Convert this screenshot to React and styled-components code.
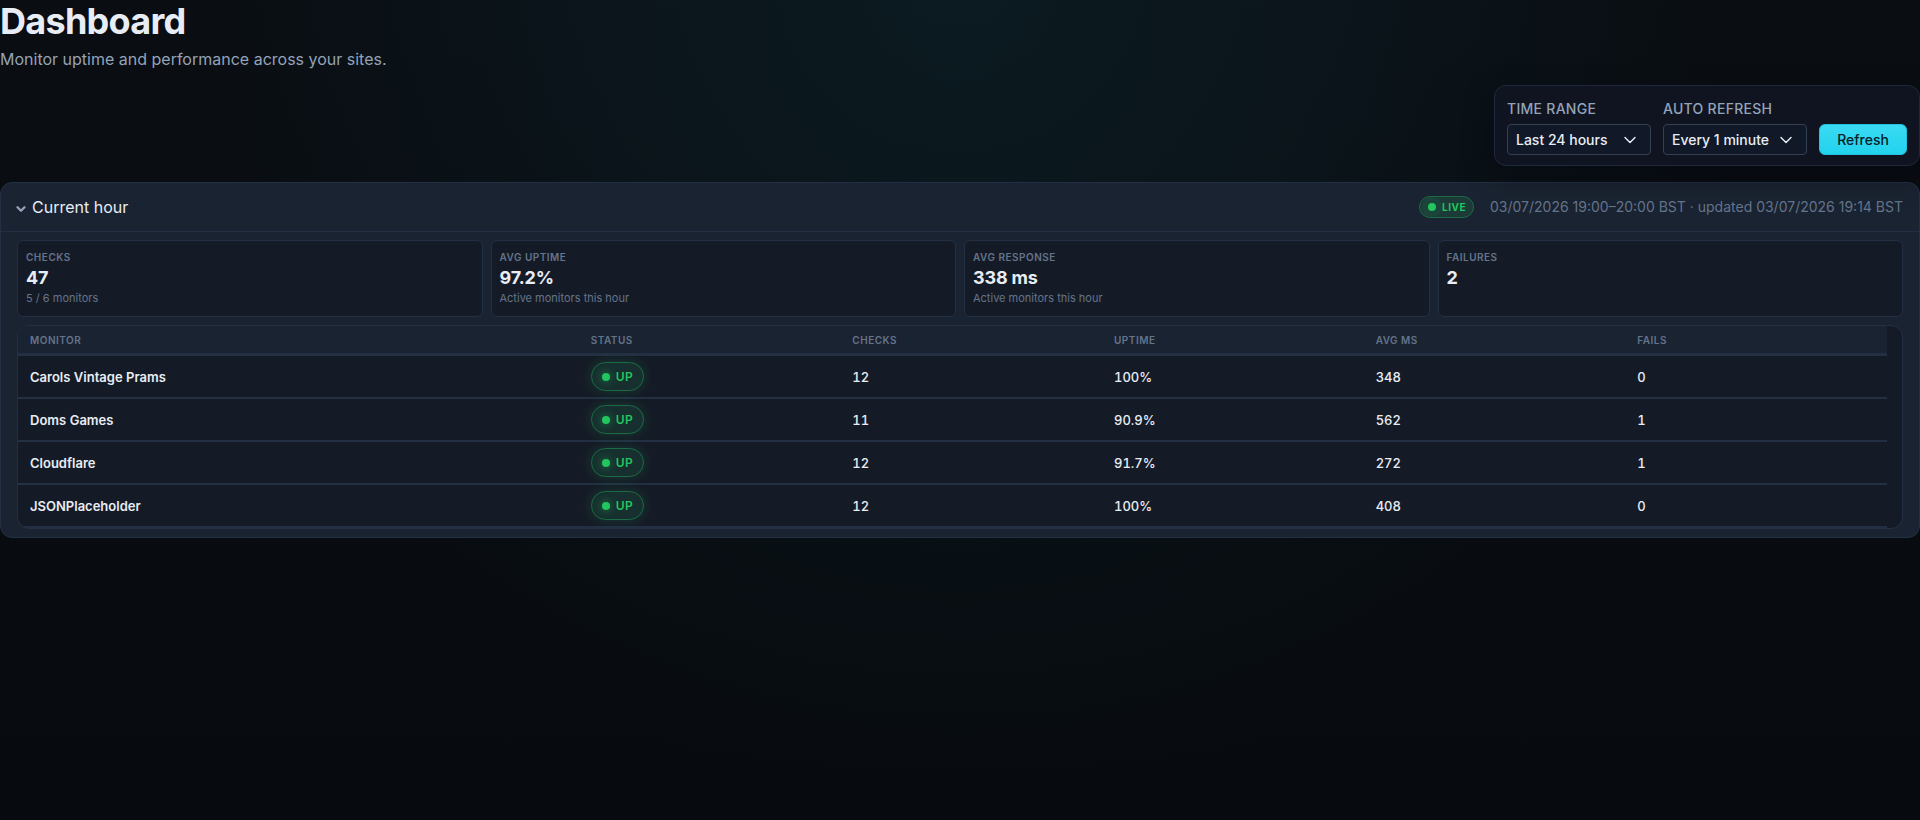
import React, { useState } from 'react';

import styled, { createGlobalStyle } from 'styled-components';
import { ChevronDown } from 'lucide-react';

const GlobalStyle = createGlobalStyle`
  *, *::before, *::after {
    box-sizing: border-box;
  }

  html {
    min-height: 100%;
    background: #070a0f;
  }

  body {
    margin: 0;
    min-height: 100vh;
    color: #e8edf5;
    font-family: Inter, 'Liberation Sans', sans-serif;
    font-size: 14px;
    line-height: 20px;
    background:
      radial-gradient(ellipse 42% 100% at 50% 0, rgba(34, 211, 238, 0.07), transparent),
      linear-gradient(180deg, #0a0d12 0%, #070a0e 100%);
  }

  button, select {
    font: inherit;
    color: inherit;
  }
`;

const Header = styled.header`
  display: flex;
  flex-direction: column;
`;

const Title = styled.h1`
  margin: 0;
  font-size: 36px;
  font-weight: 700;
  line-height: 42px;
  letter-spacing: -0.02em;
`;

const Subtitle = styled.p`
  margin: 5px 0 14px;
  font-size: 16px;
  line-height: 24px;
  color: #94a3b8;
`;

// Positioned so that its shadow falls over the panel below.
const Controls = styled.form`
  position: relative;
  display: flex;
  align-self: flex-end;
  align-items: flex-end;
  gap: 12px;
  padding: 13px 12px 10px;
  border: 1px solid #1e293b;
  border-radius: 12px;
  background: #0f1420;
  box-shadow: 0 10px 30px rgba(2, 4, 14, 0.4);
`;

const Field = styled.div`
  display: flex;
  flex-direction: column;
  gap: 5px;
`;

const FieldLabel = styled.label`
  font-weight: 500;
  letter-spacing: 0.02em;
  text-transform: uppercase;
  color: #94a3b8;
`;

const SelectBox = styled.div`
  position: relative;
  width: 144px;

  svg {
    position: absolute;
    top: 6px;
    right: 11px;
    pointer-events: none;
  }
`;

const Select = styled.select`
  display: block;
  width: 100%;
  height: 31px;
  padding: 0 32px 0 8px;
  border: 1px solid #334155;
  border-radius: 4px;
  appearance: none;
  font-weight: 500;
  background: #111827;
  color: #e8edf5;
`;

const RefreshButton = styled.button`
  width: 88px;
  height: 31px;
  padding: 0;
  border: 1px solid #22c3de;
  border-radius: 6px;
  font-weight: 500;
  color: #06202a;
  background: linear-gradient(180deg, #3adaf2, #22d3ee);
`;

const Panel = styled.section`
  margin-top: 16px;
  border: 1px solid #233044;
  border-radius: 12px;
  background: #1a2331;
`;

const PanelHeader = styled.div`
  display: flex;
  align-items: center;
  justify-content: space-between;
  height: 49px;
  padding: 0 16px 1px 13px;
  border-bottom: 1px solid #233044;
`;

const PanelToggle = styled.button`
  display: flex;
  align-items: center;
  gap: 4px;
  padding: 0;
  border: 0;
  font-size: 16px;
  line-height: 24px;
  background: none;

  svg {
    margin-top: 4px;
    color: #94a3b8;
  }
`;

const PanelMeta = styled.div`
  display: flex;
  align-items: center;
  gap: 16px;
  color: #64748b;
`;

const LiveBadge = styled.span`
  display: inline-flex;
  align-items: center;
  gap: 6px;
  height: 22px;
  padding: 0 7px 0 8px;
  border: 1px solid #1c6b44;
  border-radius: 11px;
  font-size: 10px;
  font-weight: 700;
  letter-spacing: 0.05em;
  color: #22c55e;
  background: #1b3a38;
`;

const Dot = styled.span`
  flex: none;
  width: 8px;
  height: 8px;
  border-radius: 50%;
  background: #22c55e;
  box-shadow: ${({ $ring }) => ($ring ? '0 0 0 6px rgba(34, 197, 94, 0.08)' : '0 0 8px rgba(34, 197, 94, 0.6)')};
`;

const PanelBody = styled.div`
  display: flex;
  flex-direction: column;
  gap: 8px;
  padding: 8px 16px;
`;

const Stats = styled.div`
  display: grid;
  grid-template-columns: repeat(4, 1fr);
  gap: 8px;
`;

const StatCard = styled.div`
  min-height: 77px;
  padding: 7px 8px 8px;
  border: 1px solid #233044;
  border-radius: 6px;
  background: #151b26;
`;

const StatLabel = styled.div`
  font-size: 10px;
  font-weight: 600;
  line-height: 18px;
  letter-spacing: 0.05em;
  text-transform: uppercase;
  color: #64748b;
`;

const StatValue = styled.div`
  font-size: 18px;
  font-weight: 700;
  line-height: 23px;
  letter-spacing: -0.01em;
`;

const StatHint = styled.div`
  font-size: 11px;
  line-height: 18px;
  color: #64748b;
`;

const TableWrap = styled.div`
  overflow: hidden;
  padding-right: 15px;
  border: 1px solid #233044;
  border-radius: 12px;
  background: #151b26;
`;

const Table = styled.table`
  width: 100%;
  border-collapse: separate;
  border-spacing: 0;
  table-layout: fixed;
`;

const HeadCell = styled.th`
  width: ${({ $wide }) => ($wide ? '30%' : '14%')};
  height: 30px;
  padding: 0 12px;
  border-bottom: 3px solid #233044;
  font-size: 10px;
  font-weight: 600;
  letter-spacing: 0.05em;
  text-align: left;
  text-transform: uppercase;
  color: #64748b;
  background: #1a2331;
`;

const Cell = styled.td`
  height: 43px;
  padding: 0 12px;
  border-bottom: 2px solid #233044;
  font-size: 13px;
  font-weight: ${({ $strong }) => ($strong ? 600 : 500)};
  font-variant-numeric: tabular-nums;
`;

const StatusBadge = styled.span`
  display: flex;
  align-items: center;
  gap: 6px;
  width: fit-content;
  height: 29px;
  padding: 0 10px;
  border: 1px solid #1c6b44;
  border-radius: 15px;
  font-size: 12px;
  font-weight: 600;
  letter-spacing: 0.03em;
  color: #22c55e;
  background: #17302f;
  box-shadow: 0 0 12px rgba(34, 197, 94, 0.2);
`;

const stats = [
  { label: 'Checks', value: '47', hint: '5 / 6 monitors' },
  { label: 'Avg uptime', value: '97.2%', hint: 'Active monitors this hour' },
  { label: 'Avg response', value: '338 ms', hint: 'Active monitors this hour' },
  { label: 'Failures', value: '2' },
];

const columns = ['Monitor', 'Status', 'Checks', 'Uptime', 'Avg ms', 'Fails'];

const monitors = [
  { name: 'Carols Vintage Prams', status: 'UP', checks: 12, uptime: '100%', avg: 348, fails: 0 },
  { name: 'Doms Games', status: 'UP', checks: 11, uptime: '90.9%', avg: 562, fails: 1 },
  { name: 'Cloudflare', status: 'UP', checks: 12, uptime: '91.7%', avg: 272, fails: 1 },
  { name: 'JSONPlaceholder', status: 'UP', checks: 12, uptime: '100%', avg: 408, fails: 0 },
];

const SelectField = ({ id, label, options }) => (
  <Field>
    <FieldLabel htmlFor={id}>{label}</FieldLabel>
    <SelectBox>
      <Select id={id}>
        {options.map(option => <option key={option}>{option}</option>)}
      </Select>
      <ChevronDown size={20} strokeWidth={1.7} />
    </SelectBox>
  </Field>
);

export default function App() {
  const [open, setOpen] = useState(true);

  return (
    <main>
      <GlobalStyle />
      <Header>
        <Title>Dashboard</Title>
        <Subtitle>Monitor uptime and performance across your sites.</Subtitle>
        <Controls onSubmit={e => e.preventDefault()}>
          <SelectField id="range" label="Time range" options={['Last 24 hours']} />
          <SelectField id="refresh" label="Auto refresh" options={['Every 1 minute']} />
          <RefreshButton type="submit">Refresh</RefreshButton>
        </Controls>
      </Header>
      <Panel>
        <PanelHeader>
          <PanelToggle type="button" aria-expanded={open} onClick={() => setOpen(!open)}>
            <ChevronDown size={14} strokeWidth={4} />
            Current hour
          </PanelToggle>
          <PanelMeta>
            <LiveBadge>
              <Dot $ring />
              LIVE
            </LiveBadge>
            <span>03/07/2026 19:00–20:00 BST · updated 03/07/2026 19:14 BST</span>
          </PanelMeta>
        </PanelHeader>
        {open && (
          <PanelBody>
            <Stats>
              {stats.map(({ label, value, hint }) => (
                <StatCard key={label}>
                  <StatLabel>{label}</StatLabel>
                  <StatValue>{value}</StatValue>
                  {hint && <StatHint>{hint}</StatHint>}
                </StatCard>
              ))}
            </Stats>
            <TableWrap>
              <Table>
                <thead>
                  <tr>
                    {columns.map((column, i) => (
                      <HeadCell key={column} scope="col" $wide={i === 0}>{column}</HeadCell>
                    ))}
                  </tr>
                </thead>
                <tbody>
                  {monitors.map(({ name, status, checks, uptime, avg, fails }) => (
                    <tr key={name}>
                      <Cell $strong>{name}</Cell>
                      <Cell>
                        <StatusBadge>
                          <Dot />
                          {status}
                        </StatusBadge>
                      </Cell>
                      <Cell>{checks}</Cell>
                      <Cell>{uptime}</Cell>
                      <Cell>{avg}</Cell>
                      <Cell>{fails}</Cell>
                    </tr>
                  ))}
                </tbody>
              </Table>
            </TableWrap>
          </PanelBody>
        )}
      </Panel>
    </main>
  );
}
